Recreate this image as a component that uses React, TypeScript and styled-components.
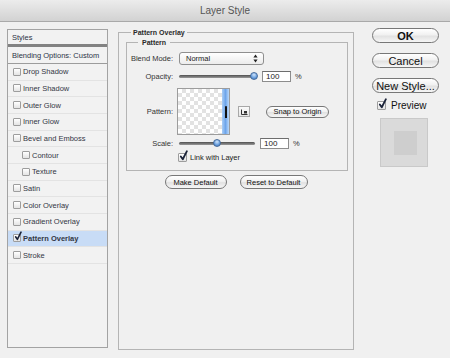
import styled, { createGlobalStyle } from "styled-components";

const GlobalStyle = createGlobalStyle`
  html, body {
    margin: 0;
    padding: 0;
    background: #efefef;
  }
  body {
    font-family: "Liberation Sans", Arial, sans-serif;
  }
`;

const Window = styled.div`
  width: 450px;
  height: 358px;
  background: #f0f0f0;
  overflow: hidden;
  display: flex;
  flex-direction: column;
`;

const TitleBar = styled.div`
  height: 21px;
  flex: none;
  display: flex;
  align-items: center;
  justify-content: center;
  background: linear-gradient(#ececec, #d2d2d2);
  border-bottom: 1px solid #a9a9a9;
  font-size: 10px;
  color: #555;
`;

const Main = styled.div`
  display: flex;
  align-items: flex-start;
  padding: 7px 0 0 7px;
`;

/* ---------- left list ---------- */

const Sidebar = styled.div`
  width: 101px;
  height: 319px;
  box-sizing: border-box;
  border: 1px solid #a3a3a3;
  background: #f2f2f2;
  display: flex;
  flex-direction: column;
  flex: none;
`;

const HeadRow = styled.div<{ $bar: "thick" | "thin" }>`
  height: 17px;
  box-sizing: border-box;
  display: flex;
  align-items: center;
  padding-left: 4px;
  font-size: 7.5px;
  color: #2c3346;
  border-bottom: ${({ $bar }) =>
    $bar === "thick" ? "3px solid #828282" : "1px solid #9c9c9c"};
`;

const ItemRow = styled.div<{ $indent?: boolean; $active?: boolean }>`
  height: 16.66px;
  box-sizing: border-box;
  display: flex;
  align-items: center;
  gap: 2px;
  padding-left: ${({ $indent }) => ($indent ? 14 : 5)}px;
  border-bottom: 1px solid #e3e3e3;
  font-size: 7.5px;
  color: #323644;
  background: ${({ $active }) => ($active ? "#c8dcf6" : "transparent")};
  font-weight: ${({ $active }) => ($active ? "bold" : "normal")};
`;

const CheckBox = styled.span<{ $size: number }>`
  position: relative;
  flex: none;
  width: ${({ $size }) => $size}px;
  height: ${({ $size }) => $size}px;
  box-sizing: border-box;
  border: 1px solid #9d9d9d;
  border-radius: 1px;
  background: linear-gradient(#ffffff, #e4e4e4);
  svg {
    position: absolute;
    left: 0;
    bottom: 0;
    overflow: visible;
  }
`;

const Check = ({ size }: { size: number }) => (
  <svg width={size} height={size + 2} viewBox="0 0 10 12">
    <path
      d="M2 7 L4.2 10.2 L8.8 1.2"
      stroke="#1a2238"
      strokeWidth="2"
      fill="none"
      strokeLinecap="round"
      strokeLinejoin="round"
    />
  </svg>
);

/* ---------- center ---------- */

const Center = styled.div`
  margin-left: 10px;
  width: 236px;
  flex: none;
`;

const Group = styled.fieldset<{ $outer?: boolean }>`
  margin: 0;
  box-sizing: border-box;
  border: 1px solid #b4b4b4;
  padding: ${({ $outer }) => ($outer ? "3px 5px 0 7px" : "6px 0 8px 0")};
  height: ${({ $outer }) => ($outer ? "321px" : "auto")};
  min-width: 0;
`;

const Legend = styled.legend<{ $outer?: boolean }>`
  margin-left: ${({ $outer }) => ($outer ? 5 : 11)}px;
  padding: ${({ $outer }) => ($outer ? "0 2px" : "0 4px")};
  font-size: 7px;
  line-height: 7px;
  font-weight: bold;
  color: #2a2a2a;
`;

const FieldRow = styled.div<{ $mt?: number }>`
  display: grid;
  grid-template-columns: 46px 1fr;
  column-gap: 6px;
  align-items: center;
  margin-top: ${({ $mt }) => $mt ?? 0}px;
`;

const Label = styled.span`
  text-align: right;
  font-size: 7.5px;
  color: #333;
`;

const Controls = styled.div`
  display: flex;
  align-items: center;
`;

const Select = styled.div`
  width: 85px;
  height: 13px;
  box-sizing: border-box;
  border: 1px solid #8f8f8f;
  border-radius: 3px;
  background: linear-gradient(#ffffff, #ececec);
  display: flex;
  align-items: center;
  justify-content: space-between;
  padding: 0 5px 0 6px;
  font-size: 7.5px;
  color: #222;
`;

const Track = styled.div<{ $width: number }>`
  position: relative;
  width: ${({ $width }) => $width}px;
  height: 3px;
  border-radius: 2px;
  background: linear-gradient(#4f4f4f, #9a9a9a);
`;

const Thumb = styled.span`
  position: absolute;
  top: -3px;
  width: 8px;
  height: 8px;
  margin-left: -4px;
  border-radius: 50%;
  box-sizing: border-box;
  border: 1px solid #456b9c;
  background: radial-gradient(circle at 50% 30%, #cfe4fb, #6fa3e0 55%, #3b73b8);
`;

const NumberBox = styled.div`
  width: 29px;
  height: 11px;
  box-sizing: border-box;
  border: 1px solid #8d8d8d;
  border-top-color: #6d6d6d;
  background: #fff;
  font-size: 8px;
  line-height: 9px;
  padding-left: 3px;
  color: #222;
  margin-left: 5px;
`;

const Percent = styled.span`
  margin-left: 4px;
  font-size: 7.5px;
  color: #333;
`;

const Swatch = styled.div`
  margin-left: -2px;
  width: 53px;
  height: 47px;
  box-sizing: border-box;
  border: 1px solid #9c9c9c;
  display: flex;
  background-color: #fff;
  background-image: linear-gradient(45deg, #e2e2e2 25%, transparent 25%, transparent 75%, #e2e2e2 75%),
    linear-gradient(45deg, #e2e2e2 25%, transparent 25%, transparent 75%, #e2e2e2 75%);
  background-size: 8px 8px;
  background-position: 0 0, 4px 4px;
  justify-content: flex-end;
`;

const SwatchStrip = styled.div`
  width: 7px;
  height: 100%;
  background: linear-gradient(90deg, #a9cdf6, #6ea5ea 50%, #b9d8fb);
  display: flex;
  justify-content: center;
  align-items: center;
`;

const StripMark = styled.span`
  width: 2px;
  height: 12px;
  background: #111;
  border-radius: 1px 1px 0 0;
`;

const IconButton = styled.div`
  margin-left: 8px;
  width: 12px;
  height: 11px;
  box-sizing: border-box;
  border: 1px solid #a8a8a8;
  background: linear-gradient(#fafafa, #e6e6e6);
  display: flex;
  align-items: center;
  justify-content: center;
`;

const Pill = styled.button<{ $w: number; $h: number; $size: number; $bold?: boolean }>`
  width: ${({ $w }) => $w}px;
  height: ${({ $h }) => $h}px;
  box-sizing: border-box;
  padding: 0;
  border: 1px solid #777;
  border-radius: ${({ $h }) => $h / 2}px;
  background: linear-gradient(#ffffff, #f1f1f1 45%, #e2e2e2 55%, #f6f6f6);
  font-family: "Liberation Sans", Arial, sans-serif;
  font-size: ${({ $size }) => $size}px;
  font-weight: ${({ $bold }) => ($bold ? "bold" : "normal")};
  color: #111;
  display: flex;
  align-items: center;
  justify-content: center;
  flex: none;
`;

const LinkText = styled.span`
  margin-left: 3px;
  font-size: 7.5px;
  color: #222;
`;

const ButtonRow = styled.div`
  display: flex;
  justify-content: center;
  gap: 13px;
  margin-top: 4px;
  padding-right: 2px;
`;

/* ---------- right ---------- */

const RightCol = styled.div`
  margin-left: 18px;
  margin-top: -1px;
  width: 67px;
  flex: none;
  display: flex;
  flex-direction: column;
  gap: 10px;
`;

const PreviewRow = styled.div`
  display: flex;
  align-items: center;
  gap: 5px;
  padding-left: 5px;
  margin-top: -4px;
  height: 13px;
  font-size: 10px;
  color: #111;
`;

const PreviewBox = styled.div`
  margin-left: 8px;
  margin-top: -4px;
  width: 48px;
  height: 49px;
  box-sizing: border-box;
  border: 1px solid #c9c9c9;
  background: #dadada;
  display: flex;
  align-items: center;
  justify-content: center;
  padding-left: 2px;
`;

const PreviewInner = styled.div`
  width: 23px;
  height: 24px;
  background: #cecece;
`;

const effects = [
  { label: "Drop Shadow" },
  { label: "Inner Shadow" },
  { label: "Outer Glow" },
  { label: "Inner Glow" },
  { label: "Bevel and Emboss" },
  { label: "Contour", indent: true },
  { label: "Texture", indent: true },
  { label: "Satin" },
  { label: "Color Overlay" },
  { label: "Gradient Overlay" },
  { label: "Pattern Overlay", active: true },
  { label: "Stroke" },
];

const App = () => {
  return (
    <>
      <GlobalStyle />
      <Window>
        <TitleBar>Layer Style</TitleBar>
        <Main>
          <Sidebar>
            <HeadRow $bar="thick">Styles</HeadRow>
            <HeadRow $bar="thin">Blending Options: Custom</HeadRow>
            {effects.map((e) => (
              <ItemRow key={e.label} $indent={e.indent} $active={e.active}>
                <CheckBox $size={8}>{e.active && <Check size={8} />}</CheckBox>
                {e.label}
              </ItemRow>
            ))}
          </Sidebar>

          <Center>
            <Group $outer>
              <Legend $outer>Pattern Overlay</Legend>
              <Group>
                <Legend>Pattern</Legend>
                <FieldRow>
                  <Label>Blend Mode:</Label>
                  <Controls>
                    <Select>
                      Normal
                      <svg width="5" height="9" viewBox="0 0 5 9">
                        <path d="M2.5 0.5 L4.6 3.4 L0.4 3.4 Z M2.5 8.5 L4.6 5.6 L0.4 5.6 Z" fill="#222" />
                      </svg>
                    </Select>
                  </Controls>
                </FieldRow>
                <FieldRow $mt={6}>
                  <Label>Opacity:</Label>
                  <Controls>
                    <Track $width={78}>
                      <Thumb style={{ left: "96%" }} />
                    </Track>
                    <NumberBox>100</NumberBox>
                    <Percent>%</Percent>
                  </Controls>
                </FieldRow>
                <FieldRow $mt={6}>
                  <Label>Pattern:</Label>
                  <Controls>
                    <Swatch>
                      <SwatchStrip>
                        <StripMark />
                      </SwatchStrip>
                    </Swatch>
                    <IconButton>
                      <svg width="7" height="6" viewBox="0 0 7 6">
                        <path d="M0.5 0.5 V5.5 H6.5" stroke="#333" strokeWidth="1" fill="none" />
                        <rect x="3" y="2" width="3" height="2.5" fill="#333" />
                      </svg>
                    </IconButton>
                    <Pill $w={63} $h={12} $size={7.5} style={{ marginLeft: 16 }}>
                      Snap to Origin
                    </Pill>
                  </Controls>
                </FieldRow>
                <FieldRow $mt={3}>
                  <Label>Scale:</Label>
                  <Controls>
                    <Track $width={76}>
                      <Thumb style={{ left: "50%" }} />
                    </Track>
                    <NumberBox>100</NumberBox>
                    <Percent>%</Percent>
                  </Controls>
                </FieldRow>
                <FieldRow $mt={4}>
                  <span />
                  <Controls>
                    <CheckBox $size={9} style={{ marginLeft: -1 }}>
                      <Check size={9} />
                    </CheckBox>
                    <LinkText>Link with Layer</LinkText>
                  </Controls>
                </FieldRow>
              </Group>
              <ButtonRow>
                <Pill $w={62} $h={14} $size={7.5}>
                  Make Default
                </Pill>
                <Pill $w={68} $h={14} $size={7.5}>
                  Reset to Default
                </Pill>
              </ButtonRow>
            </Group>
          </Center>

          <RightCol>
            <Pill $w={67} $h={15} $size={11} $bold>
              OK
            </Pill>
            <Pill $w={67} $h={15} $size={11}>
              Cancel
            </Pill>
            <Pill $w={67} $h={15} $size={11}>
              New Style...
            </Pill>
            <PreviewRow>
              <CheckBox $size={9}>
                <Check size={9} />
              </CheckBox>
              Preview
            </PreviewRow>
            <PreviewBox>
              <PreviewInner />
            </PreviewBox>
          </RightCol>
        </Main>
      </Window>
    </>
  );
};

export default App;
